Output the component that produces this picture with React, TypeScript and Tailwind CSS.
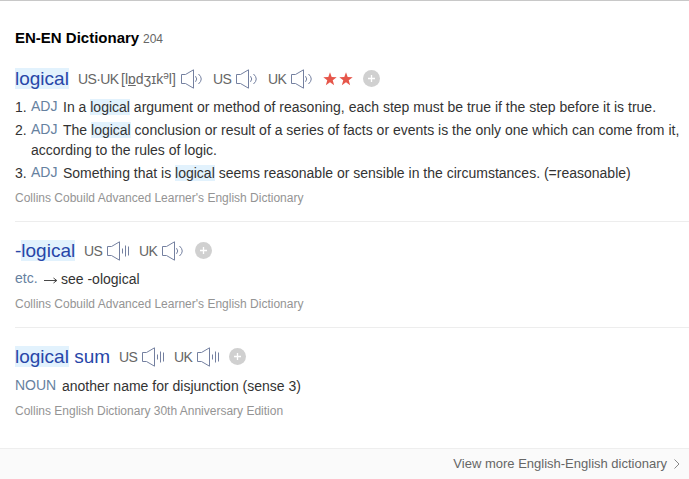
import type { ReactNode } from "react";

function Mark({ children }: { children: ReactNode }) {
  return <span className="bg-[#e2f2fd]">{children}</span>;
}

function Speaker({ bars = false, className = "" }: { bars?: boolean; className?: string }) {
  return (
    <svg width="24" height="20" viewBox="0 0 24 20" fill="none" stroke="#7480a0" className={`mt-0.5 shrink-0 ${className}`}>
      <path d="M0.5 5.5H4.5L12.5 0.8V19.2L4.5 14.5H0.5Z" />
      {bars ? (
        <path d="M15.5 7.5V12.5M18.5 4.5V15.5M21.5 5.5V14.5" />
      ) : (
        <path d="M14.5 7.2Q17 10 14.5 12.8M17.5 5Q23 10 17.5 15" />
      )}
    </svg>
  );
}

function Plus({ className = "" }: { className?: string }) {
  return (
    <svg width="17" height="17" viewBox="0 0 17 17" className={`shrink-0 ${className}`}>
      <circle cx="8.5" cy="8.5" r="8.5" fill="#d0d0d0" />
      <path d="M8.5 5V12M5 8.5H12" stroke="#fff" strokeWidth="1.3" />
    </svg>
  );
}

function Star({ className = "" }: { className?: string }) {
  return (
    <svg width="14" height="14" viewBox="0 0 24 24" fill="#e6564a" className={`mt-0.5 shrink-0 ${className}`}>
      <path d="M12 .5l2.9 8.2 8.6.2-6.8 5.3 2.4 8.4L12 17.7l-7.1 4.9 2.4-8.4L.5 8.9l8.6-.2z" />
    </svg>
  );
}

function Word({ width, children }: { width: string; children: ReactNode }) {
  return <h3 className={`${width} shrink-0 pt-0.5 text-[19px] leading-[20px] text-[#2746a8]`}>{children}</h3>;
}

function Label({ width, children }: { width: string; children: ReactNode }) {
  return <span className={`${width} shrink-0 pt-0.5 text-[14px] tracking-[-0.6px]`}>{children}</span>;
}

function Pos({ width, children }: { width: string; children: ReactNode }) {
  return <span className={`${width} -mt-px shrink-0 text-[#66819f]`}>{children}</span>;
}

function Source({ children }: { children: ReactNode }) {
  return <p className="h-5 text-[12px] leading-5 text-[#949494]">{children}</p>;
}

export default function App() {
  return (
    <main className="flex h-[479px] w-[689px] flex-col overflow-hidden border-t border-[#c8c8c8] bg-white font-['Liberation_Sans',Arial,sans-serif] text-[14px] whitespace-nowrap text-[#333]">
      <header className="mt-[27px] flex h-5 items-center pl-[15px]">
        <h2 className="w-[128px] text-[15px] font-bold text-black">EN-EN Dictionary</h2>
        <span className="pt-px text-[12px] text-[#666]">204</span>
      </header>

      <section className="mt-5 pl-[15px]">
        <div className="flex h-5 items-center text-[#666]">
          <Word width="w-[63px]"><Mark>logical</Mark></Word>
          <Label width="w-[43px]">US·UK</Label>
          <span className="w-[60px] shrink-0 pt-0.5 text-[14px]">[l<u>ɒ</u>dʒɪk<sup className="top-[-5px] text-[10px]">ə</sup>l]</span>
          <Speaker />
          <span className="w-[8px]" />
          <Label width="w-[23px]">US</Label>
          <Speaker />
          <span className="w-[8px]" />
          <Label width="w-[23px]">UK</Label>
          <Speaker />
          <Star className="ml-[8px]" />
          <Star className="ml-[2px]" />
          <Plus className="ml-[10px]" />
        </div>
        <ol className="mt-[9px] leading-5">
          <li className="flex h-5">
            <span className="w-4">1.</span><Pos width="w-[32px]">ADJ</Pos>
            <span>In a <Mark>logical</Mark> argument or method of reasoning, each step must be true if the step before it is true.</span>
          </li>
          <li className="mt-[3px] flex h-5">
            <span className="w-4">2.</span><Pos width="w-[32px]">ADJ</Pos>
            <span>The <Mark>logical</Mark> conclusion or result of a series of facts or events is the only one which can come from it,</span>
          </li>
          <li className="h-5 pl-4">according to the rules of logic.</li>
          <li className="mt-[3px] flex h-5">
            <span className="w-4">3.</span><Pos width="w-[32px]">ADJ</Pos>
            <span>Something that is <Mark>logical</Mark> seems reasonable or sensible in the circumstances. (=reasonable)</span>
          </li>
        </ol>
        <div className="mt-[5px]"><Source>Collins Cobuild Advanced Learner's English Dictionary</Source></div>
      </section>

      <section className="mt-[13px] ml-[15px] border-t border-[#ededed]">
        <div className="mt-[18px] flex h-5 items-center text-[#666]">
          <Word width="w-[69px]">-<Mark>logical</Mark></Word>
          <Label width="w-[23px]">US</Label>
          <Speaker bars />
          <span className="w-[8px]" />
          <Label width="w-[23px]">UK</Label>
          <Speaker />
          <Plus className="ml-[9px]" />
        </div>
        <div className="mt-[9px] flex h-5 leading-5">
          <Pos width="w-[28px]">etc.</Pos>
          <svg width="15" height="20" viewBox="0 0 15 20" fill="none" stroke="#333" className="mr-[3px]">
            <path d="M1 11.5H13.5M10.5 9L13.8 11.5L10.5 14" strokeWidth="0.9" />
          </svg>
          <span>see -ological</span>
        </div>
        <div className="mt-[5px]"><Source>Collins Cobuild Advanced Learner's English Dictionary</Source></div>
      </section>

      <section className="mt-[13px] ml-[15px] border-t border-[#ededed]">
        <div className="mt-[18px] flex h-5 items-center text-[#666]">
          <Word width="w-[104px]"><Mark>logical</Mark> sum</Word>
          <Label width="w-[23px]">US</Label>
          <Speaker bars />
          <span className="w-[8px]" />
          <Label width="w-[23px]">UK</Label>
          <Speaker bars />
          <Plus className="ml-[8px]" />
        </div>
        <div className="mt-[10px] flex h-5 leading-5">
          <Pos width="w-[47px]">NOUN</Pos>
          <span>another name for disjunction (sense 3)</span>
        </div>
        <div className="mt-[5px]"><Source>Collins English Dictionary 30th Anniversary Edition</Source></div>
      </section>

      <footer className="mt-auto flex h-[31px] items-center justify-end border-t border-[#eee] bg-[#fafafa] pr-[9px] text-[13px] text-[#666]">
        <span>View more English-English dictionary</span>
        <svg width="6" height="10" viewBox="0 0 6 10" fill="none" stroke="#888" className="ml-[7px]">
          <path d="M0.5 0.5L5 5L0.5 9.5" />
        </svg>
      </footer>
    </main>
  );
}
